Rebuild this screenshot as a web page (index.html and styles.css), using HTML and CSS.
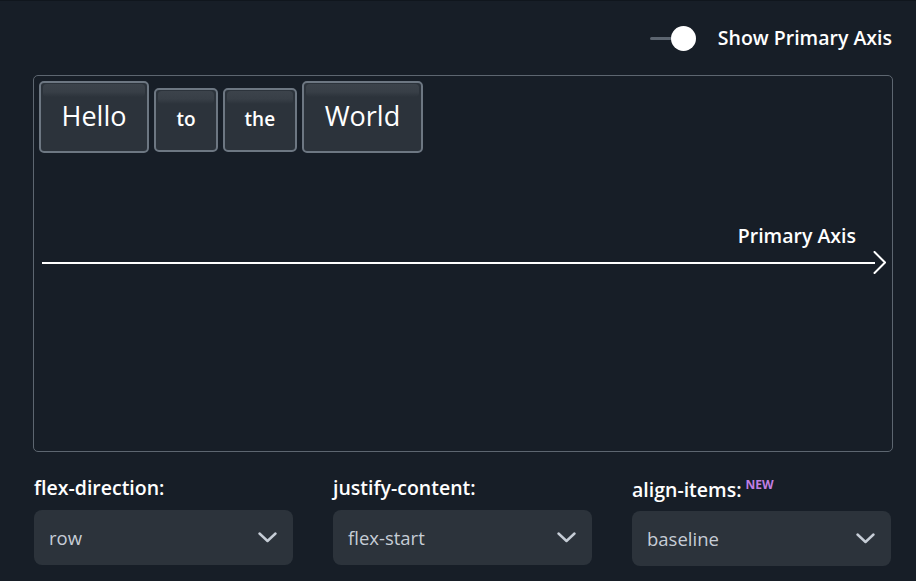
FILE: index.html
```html
<!DOCTYPE html>
<html lang="en">
<head>
<meta charset="utf-8">
<title>Flexbox demo</title>
<link rel="stylesheet" href="styles.css">
</head>
<body>
<div class="page">
  <header class="toolbar">
    <div class="toggle" role="switch" aria-checked="true">
      <span class="track"></span>
      <span class="knob"></span>
    </div>
    <span class="toggle-label">Show Primary Axis</span>
  </header>

  <div class="stage">
    <div class="item big">Hello</div>
    <div class="item small">to</div>
    <div class="item small">the</div>
    <div class="item big">World</div>
    <div class="axis">
      <span class="axis-label">Primary Axis</span>
      <div class="arrow">
        <div class="shaft"></div>
        <svg class="head" width="13" height="24" viewBox="0 0 13 24"><polyline points="1.5,1 12,11.5 1.5,22" fill="none" stroke="#ffffff" stroke-width="2" stroke-linecap="round" stroke-linejoin="miter"/></svg>
      </div>
    </div>
  </div>

  <div class="controls">
    <div class="field">
      <div class="field-label">flex-direction:</div>
      <div class="select"><span>row</span><svg class="chev" width="19" height="11" viewBox="0 0 19 11"><polyline points="1.5,1.5 9.5,9 17.5,1.5" fill="none" stroke="#c6cdd6" stroke-width="2.4" stroke-linecap="round" stroke-linejoin="round"/></svg></div>
    </div>
    <div class="field">
      <div class="field-label">justify-content:</div>
      <div class="select"><span>flex-start</span><svg class="chev" width="19" height="11" viewBox="0 0 19 11"><polyline points="1.5,1.5 9.5,9 17.5,1.5" fill="none" stroke="#c6cdd6" stroke-width="2.4" stroke-linecap="round" stroke-linejoin="round"/></svg></div>
    </div>
    <div class="field field-new">
      <div class="field-label">align-items:<span class="badge">NEW</span></div>
      <div class="select"><span>baseline</span><svg class="chev" width="19" height="11" viewBox="0 0 19 11"><polyline points="1.5,1.5 9.5,9 17.5,1.5" fill="none" stroke="#c6cdd6" stroke-width="2.4" stroke-linecap="round" stroke-linejoin="round"/></svg></div>
    </div>
  </div>
</div>
</body>
</html>
```

FILE: styles.css
```css
* { box-sizing: border-box; }

html, body {
  margin: 0;
  padding: 0;
  background: #171e27;
}

body {
  border-top: 1px solid #10161d;
  font-family: "Open Sans", "Noto Sans", sans-serif;
  color: #ffffff;
  height: 581px;
  overflow: hidden;
}

.page {
  padding-left: 33px;
  width: 893px;
}

.toolbar {
  display: flex;
  justify-content: flex-end;
  align-items: center;
  gap: 22px;
  height: 24px;
  margin-top: 25px;
  margin-bottom: 25px;
  padding-right: 1px;
}

.toggle {
  display: flex;
  align-items: center;
}

.track {
  width: 22px;
  height: 3px;
  background: #5c6570;
  border-radius: 2px;
}

.knob {
  width: 25px;
  height: 25px;
  border-radius: 50%;
  background: #ffffff;
  margin-left: -1px;
}

.toggle-label {
  font-size: 19.5px;
  font-weight: 600;
  line-height: 24px;
  white-space: nowrap;
}

.stage {
  position: relative;
  display: flex;
  align-items: baseline;
  gap: 5px;
  padding: 5px;
  height: 377px;
  width: 860px;
  border: 1px solid #5d6670;
  border-radius: 5px;
}

.item {
  position: relative;
  background: #2c333b;
  border: 2px solid #6d7782;
  border-radius: 5px;
  color: #ffffff;
  line-height: 1.2;
  font-weight: 500;
}

.item::before {
  content: "";
  position: absolute;
  top: 1px;
  left: 2px;
  right: 2px;
  height: 13px;
  border-radius: 4px;
  background: linear-gradient(#3c434b 0%, #383f47 60%, #2c333b 100%);
}

.big {
  font-size: 27px;
  padding: 17px 21px 18.5px 20.5px;
}

.small {
  font-size: 19px;
  font-weight: 600;
  padding: 18px 20px 19px;
}

.axis {
  position: absolute;
  left: 8px;
  right: 6px;
  top: 148px;
  display: flex;
  flex-direction: column;
  align-items: flex-end;
}

.axis-label {
  font-size: 19.5px;
  font-weight: 600;
  line-height: 24px;
  margin-right: 30px;
  white-space: nowrap;
}

.arrow {
  align-self: stretch;
  display: flex;
  align-items: center;
  margin-top: 3px;
  height: 24px;
}

.shaft {
  flex: 1;
  height: 2px;
  background: #ffffff;
  margin-right: -2px;
}

.head {
  display: block;
}

.controls {
  display: grid;
  grid-template-columns: repeat(3, 259px);
  column-gap: 40px;
  margin-top: 24px;
  padding-left: 1px;
}

.field-label {
  font-size: 19.5px;
  font-weight: 600;
  line-height: 24px;
  height: 24px;
  margin-bottom: 10px;
  white-space: nowrap;
}

.field-new .field-label {
  padding-top: 2px;
  height: 26px;
  margin-bottom: 9px;
}

.badge {
  position: relative;
  top: -8px;
  margin-left: 4px;
  font-size: 12px;
  font-weight: 700;
  color: #c07ee3;
}

.select {
  display: flex;
  align-items: center;
  justify-content: space-between;
  height: 55px;
  padding: 0 16px 0 15px;
  background: #2c333b;
  border-radius: 8px;
  font-size: 18.5px;
  font-weight: 500;
  color: #c6cdd6;
}

.chev {
  display: block;
}
```
